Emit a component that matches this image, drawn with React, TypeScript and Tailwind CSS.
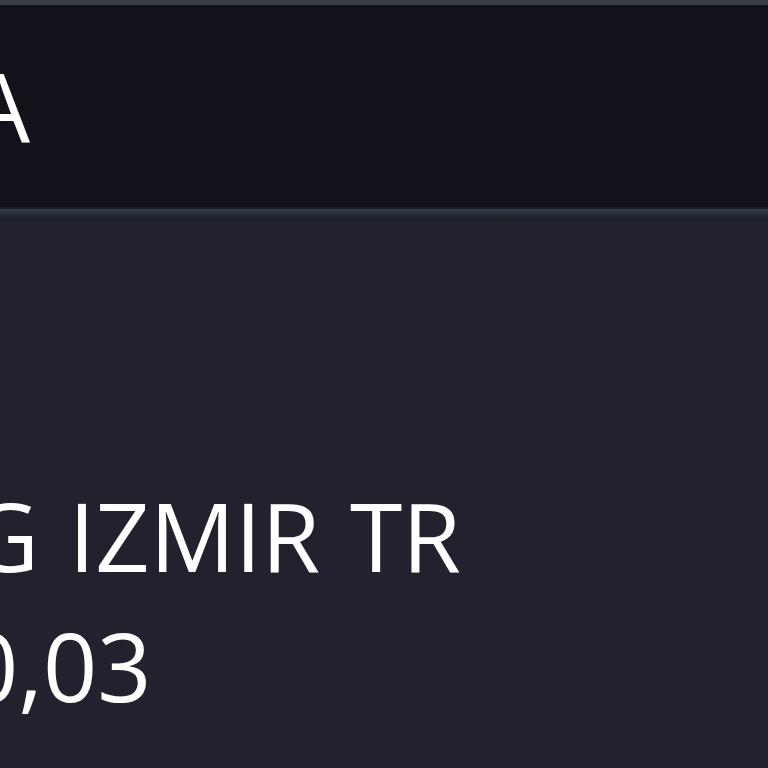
export default function App() {
  return (
    <div className="w-[768px] h-[768px] overflow-hidden bg-[#21222d] text-white font-['Open_Sans',sans-serif]">
      <div className="h-[5px] bg-[#3a3d48]" />
      <div className="h-[204px] bg-[#13121b] flex items-center border-b-2 border-[#171c2a]">
        <span className="ml-[-30px] text-[95px] leading-normal">A</span>
      </div>
      <div className="h-[8px] bg-gradient-to-b from-[#383e4a] to-[#22242f]" />
      <div className="pt-[253px] text-[95px] leading-[130px]">
        <div className="ml-[-30px] whitespace-nowrap [word-spacing:5px]">G IZMIR TR</div>
        <div className="ml-[-36px] whitespace-nowrap">0,03</div>
      </div>
    </div>
  )
}
